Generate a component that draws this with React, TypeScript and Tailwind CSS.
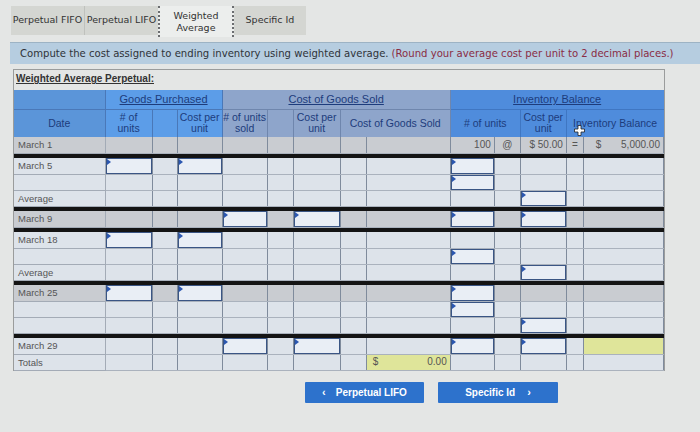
import React from "react";

const W = [91, 47, 25, 45, 45, 26, 47, 26, 84, 44, 26, 46, 17, 80];

type Cell = null | { t: "in" } | { t: "txt"; v: string; a: "l" | "r" | "c" } | { t: "bal"; v: string } | { t: "yel"; v?: string };
type Row = { kind: "row"; label: string; gray?: boolean; cells: Record<number, Cell> } | { kind: "sep" };

const IN: Cell = { t: "in" };

const rows: Row[] = [
  {
    kind: "row",
    label: "March 1",
    gray: true,
    cells: {
      9: { t: "txt", v: "100", a: "r" },
      10: { t: "txt", v: "@", a: "c" },
      11: { t: "txt", v: "$ 50.00", a: "r" },
      12: { t: "txt", v: "=", a: "c" },
      13: { t: "bal", v: "5,000.00" },
    },
  },
  { kind: "sep" },
  { kind: "row", label: "March 5", cells: { 1: IN, 3: IN, 9: IN } },
  { kind: "row", label: "", cells: { 9: IN } },
  { kind: "row", label: "Average", cells: { 11: IN } },
  { kind: "sep" },
  { kind: "row", label: "March 9", gray: true, cells: { 4: IN, 6: IN, 9: IN, 11: IN } },
  { kind: "sep" },
  { kind: "row", label: "March 18", cells: { 1: IN, 3: IN } },
  { kind: "row", label: "", cells: { 9: IN } },
  { kind: "row", label: "Average", cells: { 11: IN } },
  { kind: "sep" },
  { kind: "row", label: "March 25", gray: true, cells: { 1: IN, 3: IN, 9: IN } },
  { kind: "row", label: "", cells: { 9: IN } },
  { kind: "row", label: "", cells: { 11: IN } },
  { kind: "sep" },
  { kind: "row", label: "March 29", cells: { 4: IN, 6: IN, 9: IN, 11: IN, 13: { t: "yel" } } },
  { kind: "row", label: "Totals", cells: { 8: { t: "yel", v: "0.00" } } },
];

function InputBox() {
  return (
    <div className="relative h-full w-full border border-[#3a5584] bg-[#e9eef5]">
      <div className="absolute left-0 top-0 h-0 w-0 border-y-[3px] border-l-[4px] border-y-transparent border-l-[#2b57b0]" />
    </div>
  );
}

function renderCell(c: Cell | undefined) {
  if (!c) return null;
  if (c.t === "in") return <InputBox />;
  if (c.t === "txt")
    return (
      <div
        className={
          "flex h-full items-center px-[3px] " +
          (c.a === "r" ? "justify-end" : c.a === "c" ? "justify-center" : "justify-start")
        }
      >
        {c.v}
      </div>
    );
  if (c.t === "bal")
    return (
      <div className="flex h-full items-center justify-between px-[3px] pl-[12px]">
        <span>$</span>
        <span>{c.v}</span>
      </div>
    );
  if (c.t === "yel")
    return (
      <div className="flex h-full items-center justify-between bg-[#dfe59a] px-[3px] pl-[6px]">
        {c.v ? (
          <>
            <span>$</span>
            <span>{c.v}</span>
          </>
        ) : null}
      </div>
    );
  return null;
}

export default function App() {
  const font = { fontFamily: '"DejaVu Sans", Verdana, sans-serif' };
  return (
    <div className="h-[432px] w-[700px] overflow-hidden bg-[#e4e6e5] text-[#333]">
      {/* Tabs */}
      <div className="flex pl-[11px] pt-[6px]" style={font}>
        <div className="flex h-[29px] w-[74px] items-center justify-center border-r border-[#bfc1bd] bg-[#d4d6d2] text-[9.5px] text-[#333]">
          Perpetual FIFO
        </div>
        <div className="flex h-[29px] w-[73px] items-center justify-center bg-[#d4d6d2] text-[9.5px] text-[#333]">
          Perpetual LIFO
        </div>
        <div className="flex h-[31px] w-[76px] flex-col items-center justify-center border-x-2 border-dotted border-[#6b6d70] bg-[#eceeed] text-[9.5px] leading-[12px] text-[#333]">
          <span>Weighted</span>
          <span>Average</span>
        </div>
        <div className="flex h-[29px] w-[72px] items-center justify-center bg-[#d4d6d2] text-[9.5px] text-[#333]">
          Specific Id
        </div>
      </div>

      {/* Instruction bar */}
      <div
        className="ml-[10px] mt-[5px] flex h-[22px] items-center whitespace-nowrap border-t border-[#9db3c4] bg-[#b6cde0] pl-[10px] text-[10.1px]"
        style={font}
      >
        <span className="text-[#2f3338]">
          Compute the cost assigned to ending inventory using weighted average.{" "}
        </span>
        <span className="ml-[3px] text-[#8a2c44]">(Round your average cost per unit to 2 decimal places.)</span>
      </div>

      {/* Section box */}
      <div
        className="relative ml-[13px] mt-[5px] w-[652px] border-l border-t border-r border-[#9a9c9c]"
        style={{ fontFamily: '"Liberation Sans", Arial, sans-serif' }}
      >
        <div className="h-[20px] pl-[2px] pt-[3px] text-[10px] font-bold leading-[12px] text-[#333]">
          <span className="underline">Weighted Average Perpetual:</span>
        </div>
        <table className="w-[650px] table-fixed border-collapse text-[10px] text-[#555]">
          <colgroup>
            {W.map((w, i) => (
              <col key={i} style={{ width: w }} />
            ))}
          </colgroup>
          <thead className="text-[#1d3c7c]">
            <tr className="h-[19px] text-[11px]">
              <th className="border-b border-r border-[#4a78b8] bg-[#5b95d9]" />
              <th colSpan={3} className="border-b border-r border-[#4a78b8] bg-[#5c9de8] font-normal">
                <span className="underline">Goods Purchased</span>
              </th>
              <th colSpan={5} className="border-b border-r border-[#6f86ad] bg-[#8ea5cb] font-normal">
                <span className="underline">Cost of Goods Sold</span>
              </th>
              <th colSpan={5} className="border-b border-[#3f76c2] bg-[#4f8cdc] font-normal">
                <span className="underline">Inventory Balance</span>
              </th>
            </tr>
            <tr className="h-[28px] text-[10.5px] leading-[11px]">
              <th className="border-r border-[#4a78b8] bg-[#5b95d9] font-normal">Date</th>
              <th className="border-r border-[#4a78b8] bg-[#5c9de8] font-normal">
                # of
                <br />
                units
              </th>
              <th className="border-r border-[#4a78b8] bg-[#5c9de8]" />
              <th className="border-r border-[#4a78b8] bg-[#5c9de8] font-normal">
                Cost per
                <br />
                unit
              </th>
              <th className="border-r border-[#6f86ad] bg-[#8ea5cb] font-normal">
                # of units
                <br />
                sold
              </th>
              <th className="border-r border-[#6f86ad] bg-[#8ea5cb]" />
              <th className="border-r border-[#6f86ad] bg-[#8ea5cb] font-normal">
                Cost per
                <br />
                unit
              </th>
              <th colSpan={2} className="border-r border-[#6f86ad] bg-[#8ea5cb] font-normal">
                Cost of Goods Sold
              </th>
              <th colSpan={2} className="border-r border-[#3f76c2] bg-[#4f8cdc] font-normal">
                # of units
              </th>
              <th className="border-r border-[#3f76c2] bg-[#4f8cdc] font-normal">
                Cost per
                <br />
                unit
              </th>
              <th colSpan={2} className="whitespace-nowrap bg-[#4f8cdc] font-normal">
                Inventory Balance
              </th>
            </tr>
          </thead>
          <tbody>
            {rows.map((r, ri) =>
              r.kind === "sep" ? (
                <tr key={ri} className="h-[5px]">
                  <td colSpan={14} className="bg-[#141414] p-0" />
                </tr>
              ) : (
                <tr key={ri} className={"h-[16px] " + (r.gray ? "bg-[#c9ccd1]" : "bg-[#dde3ea]")}>
                  <td className="h-[16px] border-b border-r border-[#a3abb6] p-0 pl-[4px] text-[9.5px] leading-[15px] text-[#555]">
                    {r.label}
                  </td>
                  {Array.from({ length: 13 }, (_, k) => {
                    const ci = k + 1;
                    return (
                      <td
                        key={ci}
                        className="h-[16px] border-b border-r border-[#7f8b9c] p-0 leading-[14px] [border-bottom-color:#aab2bd]"
                      >
                        {renderCell(r.cells[ci])}
                      </td>
                    );
                  })}
                </tr>
              )
            )}
          </tbody>
        </table>
        {/* mouse cursor */}
        <svg className="absolute left-[560px] top-[55px]" width="11" height="11" viewBox="0 0 11 11">
          <path d="M4 0.5h3v3.5h3.5v3h-3.5v3.5h-3v-3.5h-3.5v-3h3.5z" fill="#fff" stroke="#222" strokeWidth="0.8" />
        </svg>
      </div>

      {/* Buttons */}
      <div
        className="mt-[11px] flex gap-[14px] pl-[305px] text-[10px] font-bold text-white"
        style={{ fontFamily: '"Liberation Sans", Arial, sans-serif' }}
      >
        <div className="flex h-[21px] w-[119px] items-center justify-center gap-[10px] rounded-[1px] bg-[#2d72cc]">
          <span className="text-[11px]">&#x2039;</span>
          <span>Perpetual LIFO</span>
        </div>
        <div className="flex h-[21px] w-[120px] items-center justify-center gap-[12px] rounded-[1px] bg-[#2d72cc]">
          <span>Specific Id</span>
          <span className="text-[11px]">&#x203A;</span>
        </div>
      </div>
    </div>
  );
}
